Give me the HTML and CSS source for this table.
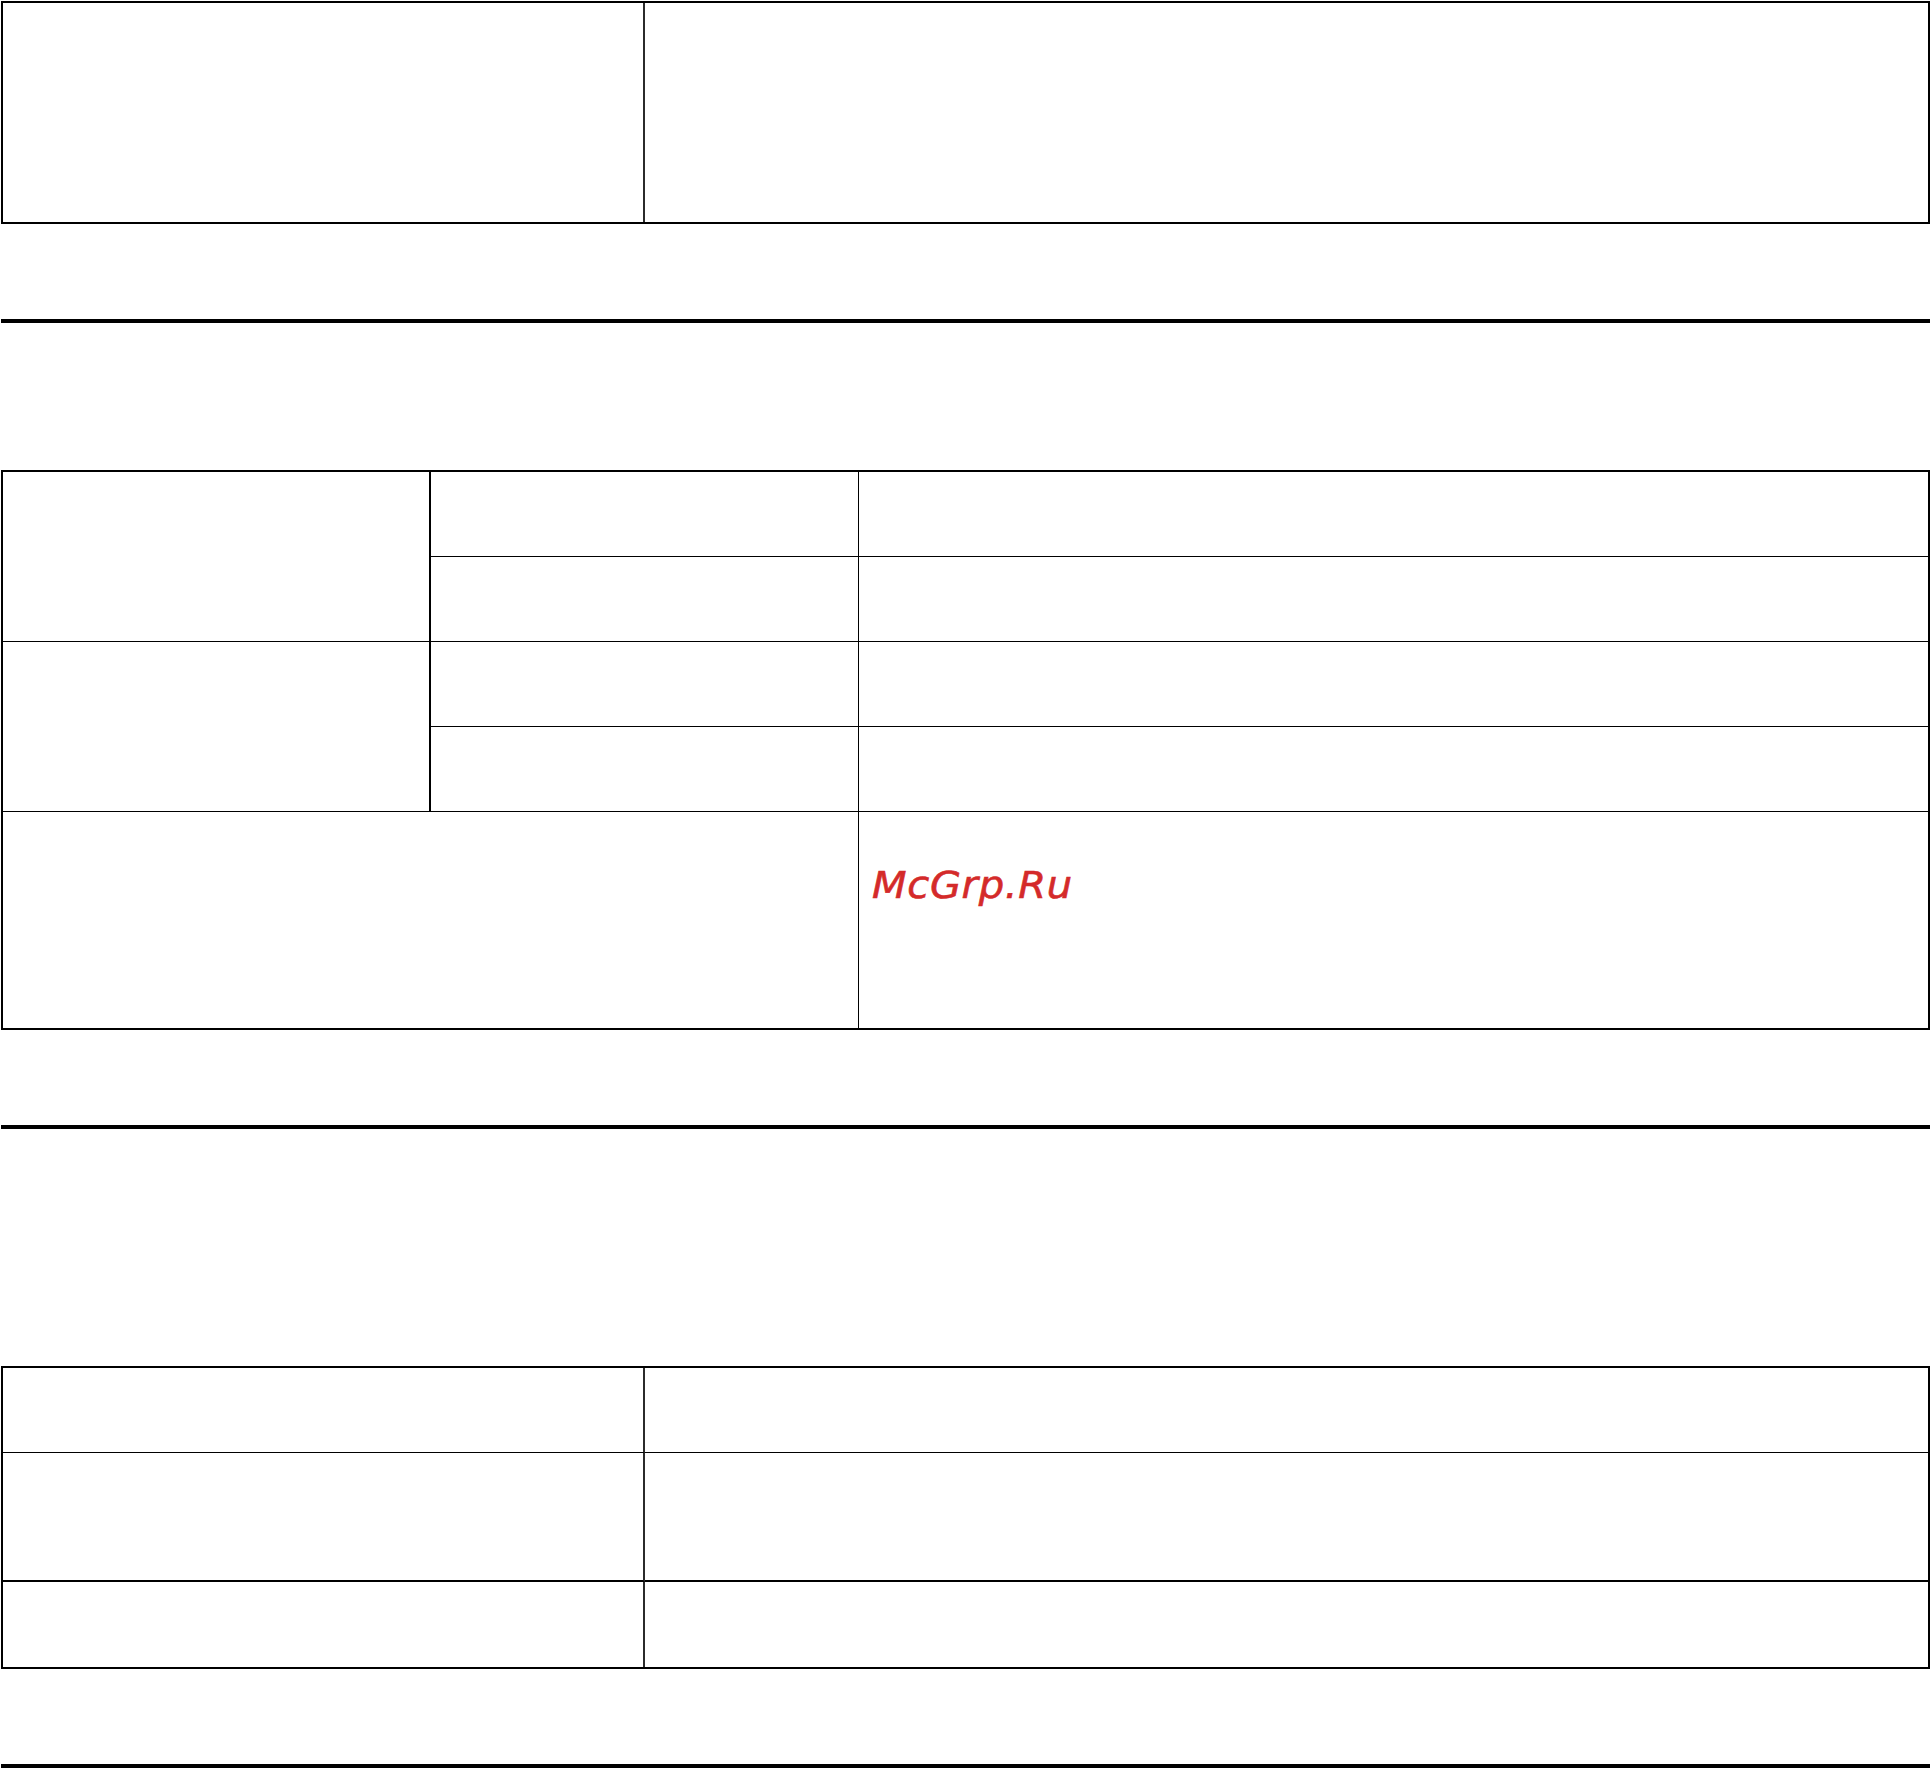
FILE: index.html
```html
<!DOCTYPE html>
<html lang="ru">
<head>
<meta charset="utf-8">
<title>Page</title>
<link rel="stylesheet" href="styles.css">
</head>
<body>
<div class="page">
  <div class="table t1">
    <div class="cell c-left"></div>
    <div class="cell c-right"></div>
  </div>

  <div class="rule r1"></div>

  <div class="table t2">
    <div class="cell a span2 b-bottom"></div>
    <div class="cell b b-bottom"></div>
    <div class="cell c b-bottom"></div>
    <div class="cell b b-bottom"></div>
    <div class="cell c b-bottom"></div>
    <div class="cell a span2 b-bottom"></div>
    <div class="cell b b-bottom"></div>
    <div class="cell c b-bottom"></div>
    <div class="cell b b-bottom"></div>
    <div class="cell c b-bottom"></div>
    <div class="cell ab"></div>
    <div class="cell c"><span class="brand">McGrp.Ru</span></div>
  </div>

  <div class="rule r2"></div>

  <div class="table t3">
    <div class="cell c-left thin-bottom"></div>
    <div class="cell c-right thin-bottom"></div>
    <div class="cell c-left thick-bottom"></div>
    <div class="cell c-right thick-bottom"></div>
    <div class="cell c-left"></div>
    <div class="cell c-right"></div>
  </div>

  <div class="rule r3"></div>
</div>
</body>
</html>
```

FILE: styles.css
```css
html, body {
  margin: 0;
  padding: 0;
  background: #ffffff;
}

body {
  font-family: "DejaVu Sans", "Liberation Sans", sans-serif;
  overflow: hidden;
}

.page {
  width: 1929px;
  padding: 1px 0 0 1px;
  display: flex;
  flex-direction: column;
}

.table {
  display: grid;
  border: 2px solid #000;
  box-sizing: border-box;
  width: 1929px;
}

.cell {
  box-sizing: border-box;
}

/* Table 1 */
.t1 {
  height: 223px;
  grid-template-columns: 642px 1fr;
}

.c-left {
  border-right: 2px solid #2b2b2b;
}

/* Rules */
.rule {
  height: 4px;
  background: #000;
  width: 1929px;
}

.r1 { margin-top: 95px; }
.r2 { margin-top: 95px; }
.r3 { margin-top: 95px; }

/* Table 2 */
.t2 {
  margin-top: 147px;
  height: 560px;
  grid-template-columns: 428px 428px 1fr;
  grid-template-rows: 85px 85px 85px 85px 1fr;
}

.t2 .a {
  border-right: 2px solid #000;
}

.t2 .span2 {
  grid-row: span 2;
}

.t2 .b {
  border-right: 1px solid #000;
}

.t2 .b-bottom {
  border-bottom: 1px solid #000;
}

.t2 .ab {
  grid-column: span 2;
  border-right: 1px solid #000;
}

.t2 .c:last-child {
  padding: 54px 0 0 13px;
}

.brand {
  display: inline-block;
  font-family: "DejaVu Sans", sans-serif;
  font-style: oblique;
  font-size: 38px;
  line-height: 38px;
  letter-spacing: 0.6px;
  color: #d42a2a;
  -webkit-text-stroke: 0.6px #d42a2a;
  transform: scaleX(1.055);
  transform-origin: left center;
}

/* Table 3 */
.t3 {
  margin-top: 237px;
  height: 303px;
  grid-template-columns: 642px 1fr;
  grid-template-rows: 85px 129px 1fr;
}

.t3 .thin-bottom {
  border-bottom: 1px solid #000;
}

.t3 .thick-bottom {
  border-bottom: 2px solid #000;
}
```
